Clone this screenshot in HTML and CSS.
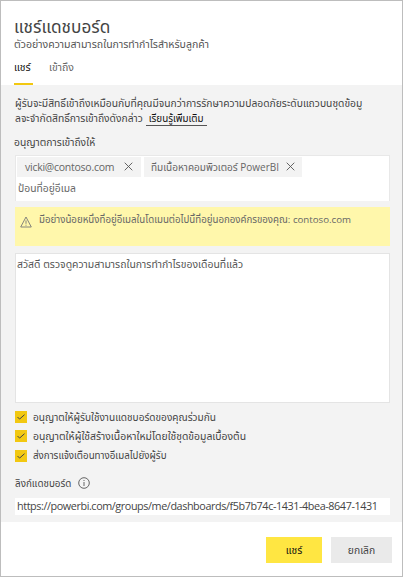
FILE: index.html
```html
<!DOCTYPE html>
<html lang="th">
<head>
<meta charset="utf-8">
<title>แชร์แดชบอร์ด</title>
<link rel="stylesheet" href="styles.css">
</head>
<body>
<main class="dialog">
  <header class="header">
    <h1 class="title"><span>แชร์แดชบอร์ด</span></h1>
    <p class="subtitle"><span>ตัวอย่างความสามารถในการทำกำไรสำหรับลูกค้า</span></p>
    <nav class="tabs">
      <a class="tab active"><span>แชร์</span></a>
      <a class="tab"><span>เข้าถึง</span></a>
    </nav>
  </header>
  <section class="content">
    <p class="intro"><span class="intro-first">ผู้รับจะมีสิทธิ์เข้าถึงเหมือนกับที่คุณมีจนกว่าการรักษาความปลอดภัยระดับแถวบนชุดข้อมู</span><br><span class="intro-second">ลจะจำกัดสิทธิ์การเข้าถึงดังกล่าว</span><a class="learn">เรียนรู้เพิ่มเติม</a></p>
    <div class="label"><span>อนุญาตการเข้าถึงให้</span></div>
    <div class="recipients">
      <div class="chips">
        <div class="chip chip-mail"><span>vicki@contoso.com</span><svg class="close" viewBox="0 0 9 9"><path d="M.7.7l7.6 7.6M8.3.7L.7 8.3"/></svg></div>
        <div class="chip chip-team"><span>ทีมเนื้อหาคอมพิวเตอร์ PowerBI</span><svg class="close" viewBox="0 0 9 9"><path d="M.7.7l7.6 7.6M8.3.7L.7 8.3"/></svg></div>
      </div>
      <div class="placeholder"><span>ป้อนที่อยู่อีเมล</span></div>
    </div>
    <div class="warning">
      <svg class="triangle" viewBox="0 0 12 12"><path d="M6 1L11.3 11H.7zM6 4.4v3.4M6 8.7v1"/></svg>
      <span>มีอย่างน้อยหนึ่งที่อยู่อีเมลในโดเมนต่อไปนี้ที่อยู่นอกองค์กรของคุณ: contoso.com</span>
    </div>
    <div class="message"><span>สวัสดี ตรวจดูความสามารถในการทำกำไรของเดือนที่แล้ว</span></div>
    <div class="options">
      <div class="option"><svg class="check" viewBox="0 0 12 12"><path d="M2.5 6l2.1 2.1L9.5 3.7"/></svg><span class="opt-1">อนุญาตให้ผู้รับใช้งานแดชบอร์ดของคุณร่วมกัน</span></div>
      <div class="option"><svg class="check" viewBox="0 0 12 12"><path d="M2.5 6l2.1 2.1L9.5 3.7"/></svg><span class="opt-2">อนุญาตให้ผู้ใช้สร้างเนื้อหาใหม่โดยใช้ชุดข้อมูลเบื้องต้น</span></div>
      <div class="option"><svg class="check" viewBox="0 0 12 12"><path d="M2.5 6l2.1 2.1L9.5 3.7"/></svg><span class="opt-3">ส่งการแจ้งเตือนทางอีเมลไปยังผู้รับ</span></div>
    </div>
    <div class="link-label"><span>ลิงก์แดชบอร์ด</span><svg class="info" viewBox="0 0 12 12"><circle cx="6" cy="6" r="5.3"/><path d="M6 5v4M6 3v1"/></svg></div>
    <div class="url"><span>https://powerbi.com/groups/me/dashboards/f5b7b74c-1431-4bea-8647-1431</span></div>
  </section>
  <footer class="footer">
    <div class="button primary"><span>แชร์</span></div>
    <div class="button secondary"><span>ยกเลิก</span></div>
  </footer>
</main>
</body>
</html>
```
FILE: styles.css
```css
* { box-sizing: border-box; }
body { margin: 0; font-family: "Open Sans", "Noto Sans Thai", "Noto Sans", sans-serif; font-size: 10.3px; color: #444; white-space: nowrap; overflow: hidden; }
h1, p { margin: 0; font-weight: normal; }
svg { fill: none; stroke: #555; stroke-width: .9; flex: none; }
.dialog { width: 403px; height: 577px; border: 1px solid #bdbdbd; background: #fff; overflow: hidden; }
.header { height: 84px; padding: 15px 13px 0; }
.title { font-size: 17.2px; line-height: 22px; height: 21px; }
.subtitle { font-size: 10.55px; height: 14px; line-height: 14px; color: #555; }
.tabs { display: flex; gap: 16px; margin-top: 6px; height: 28px; }
.tab { line-height: 21px; font-size: 10.5px; color: #666; }
.tab.active { color: #111; width: 19px; border-bottom: 2px solid #f2c811; }
.content { height: 437px; background: #f3f3f3; padding: 11px 12px 0 14px; }
.intro { line-height: 15px; height: 29px; }
.learn { margin-left: 3px; padding: 0 3px; color: #111; border-bottom: 1px solid #555; font-size: 9.8px; }
.label { line-height: 16px; height: 16px; margin-top: 9px; margin-left: -1px; }
.recipients { margin-top: 5px; height: 46px; background: #fff; border: 1px solid #e8e8e8; border-bottom: 0; padding: 1px; }
.chips { display: flex; gap: 3px; }
.chip { height: 20px; line-height: 19px; background: #f3f3f3; padding: 0 8px; display: flex; align-items: center; justify-content: space-between; color: #666; }
.chip-mail { width: 124px; font-size: 10.5px; letter-spacing: -.25px; }
.chip-team { width: 158px; padding: 0 7px; font-size: 10px; }
.close { width: 9px; height: 9px; margin-top: -2px; }
.placeholder { line-height: 23px; padding-left: 1px; color: #666; }
.warning { margin-top: 6px; height: 39px; background: #fff7ab; display: flex; padding: 4px 5px; gap: 7px; line-height: 18px; color: #666; font-size: 9.7px; }
.triangle { width: 12px; height: 12px; margin-top: 5px; stroke: #777; }
.message { margin-top: 7px; height: 150px; background: #fff; border: 1px solid #e4e4e4; padding: 1px; line-height: 18px; color: #555; font-size: 10.45px; }
.options { margin-top: 4px; display: grid; grid-template-rows: 20px 18px 21px; }
.option { display: flex; align-items: center; gap: 6px; line-height: 18px; }
.opt-1 { font-size: 10.1px; }
.opt-2 { font-size: 10.4px; }
.opt-3 { font-size: 9.75px; }
.check { width: 12px; height: 12px; background: #f2c811; stroke: #444; stroke-width: 1; }
.link-label { margin-top: 8px; height: 18px; line-height: 18px; display: flex; align-items: center; gap: 7px; font-size: 9.9px; }
.info { width: 12px; height: 12px; }
.url { margin-top: 6px; height: 17px; line-height: 16px; background: #fff; padding-left: 2px; font-size: 10.8px; letter-spacing: -.41px; }
.footer { height: 54px; display: flex; justify-content: flex-end; gap: 9px; padding: 15px 10px 0; }
.button { height: 26px; line-height: 26px; text-align: center; }
.primary { width: 56px; background: #ffe642; color: #111; }
.secondary { width: 61px; background: #eaeaea; }
```
